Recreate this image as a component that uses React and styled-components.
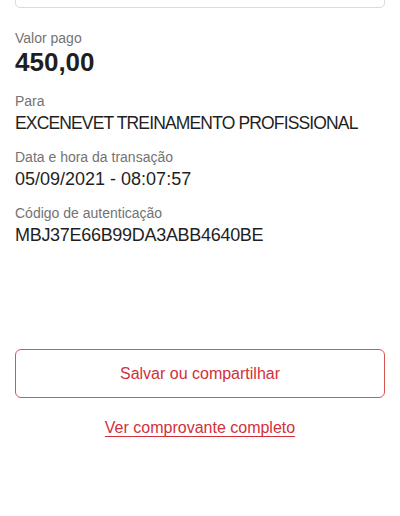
import React from 'react';
import styled, { createGlobalStyle } from 'styled-components';

const GlobalStyle = createGlobalStyle`
  body {
    margin: 0;
    background: #ffffff;
    font-family: "Liberation Sans", Arial, sans-serif;
  }
`;

const Page = styled.div`
  width: 400px;
  height: 516px;
  overflow: hidden;
  padding: 0 15px;
  box-sizing: border-box;
  background: #fff;
`;

const Card = styled.div`
  height: 40px;
  margin-top: -34px;
  border: 1px solid #dcdcdc;
  border-radius: 5px;
`;

const Details = styled.div`
  margin-top: 21px;
  display: flex;
  flex-direction: column;
  gap: 14px;
`;

const Field = styled.div`
  display: flex;
  flex-direction: column;
`;

const Label = styled.span`
  font-size: 14px;
  line-height: 18px;
  color: #737373;
`;

const Value = styled.span`
  margin-top: ${p => (p.$big ? '0' : '2px')};
  font-size: ${p => (p.$big ? '26px' : p.$size || '18px')};
  line-height: ${p => (p.$big ? '30px' : '22px')};
  font-weight: ${p => (p.$big ? 700 : 400)};
  letter-spacing: ${p => p.$spacing || 'normal'};
  white-space: nowrap;
  color: #1f1f1f;
  margin-bottom: ${p => (p.$big ? '1px' : '0')};
`;

const Actions = styled.div`
  margin-top: 103px;
  display: flex;
  flex-direction: column;
  align-items: center;
`;

const OutlineButton = styled.button`
  width: 100%;
  height: 49px;
  border: 1px solid #d9534f;
  border-radius: 6px;
  background: #fff;
  color: #d2303a;
  font-family: inherit;
  font-size: 16px;
  cursor: pointer;
`;

const LinkButton = styled.a`
  margin-top: 20px;
  font-size: 16px;
  line-height: 20px;
  color: #d2303a;
  text-decoration: underline;
  text-underline-offset: 3px;
  text-decoration-thickness: 1px;
  cursor: pointer;
`;

// uppercase runs wide in this font, so these are squeezed to the original width
const fields = [
  { label: 'Valor pago', value: '450,00', big: true },
  { label: 'Para', value: 'EXCENEVET TREINAMENTO PROFISSIONAL', size: '17.5px', spacing: '-0.85px' },
  { label: 'Data e hora da transação', value: '05/09/2021 - 08:07:57' },
  { label: 'Código de autenticação', value: 'MBJ37E66B99DA3ABB4640BE', spacing: '-0.3px' },
];

export default function App() {
  return (
    <Page>
      <GlobalStyle />
      <Card />
      <Details>
        {fields.map(f => (
          <Field key={f.label}>
            <Label>{f.label}</Label>
            <Value $big={f.big} $size={f.size} $spacing={f.spacing}>{f.value}</Value>
          </Field>
        ))}
      </Details>
      <Actions>
        <OutlineButton>Salvar ou compartilhar</OutlineButton>
        <LinkButton>Ver comprovante completo</LinkButton>
      </Actions>
    </Page>
  );
}
